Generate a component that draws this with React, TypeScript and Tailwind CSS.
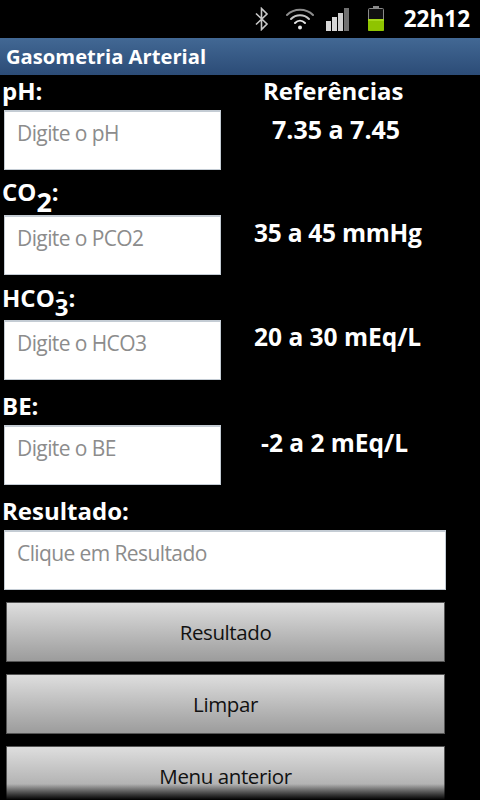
const font = { fontFamily: '"Open Sans", "Noto Sans", sans-serif' };

function BluetoothIcon() {
  return (
    <svg className="h-[24px] w-[14px]" viewBox="0 0 14 24" fill="none" stroke="#c8c8c8" strokeWidth="1.6">
      <path d="M1 6.5 L12 17 L6.5 22.5 V1.5 L12 7 L1 17.5" />
    </svg>
  );
}

function WifiIcon() {
  return (
    <svg className="ml-[17px] h-[24px] w-[28px]" viewBox="0 0 28 24" fill="none" strokeLinecap="round">
      <path d="M1 8 C8 1 20 1 27 8" stroke="#8c8c8c" strokeWidth="2" />
      <path d="M5 12 C10 7 18 7 23 12" stroke="#c4c4c4" strokeWidth="2" />
      <path d="M9 16 C12 13 16 13 19 16" stroke="#e4e4e4" strokeWidth="2" />
      <circle cx="14" cy="20.5" r="2" fill="#e8e8e8" />
    </svg>
  );
}

function SignalIcon() {
  return (
    <svg className="ml-[11px] h-[24px] w-[24px]" viewBox="0 0 24 24">
      <rect x="1" y="14" width="5" height="10" fill="#d8d8d8" />
      <rect x="7" y="10" width="5" height="14" fill="#d8d8d8" />
      <rect x="13" y="6" width="5" height="18" fill="#d0d0d0" />
      <rect x="19" y="1" width="5" height="23" fill="#707070" />
    </svg>
  );
}

function BatteryIcon() {
  return (
    <svg className="ml-[18px] h-[26px] w-[18px]" viewBox="0 0 18 26">
      <rect x="6" y="0" width="6" height="3" fill="#8a8a8a" />
      <rect x="1.5" y="2.5" width="15" height="22" rx="1" fill="#111" stroke="#8a8a8a" />
      <rect x="1" y="13" width="16" height="12" rx="1" fill="#8fc400" />
      <rect x="1" y="13" width="16" height="2" fill="#a6d81a" />
    </svg>
  );
}

function Label({ children, spacing }: { children: React.ReactNode; spacing: string }) {
  return <div className={`pl-[2px] text-[24px] font-bold leading-[30px] text-white ${spacing}`}>{children}</div>;
}

function Field({ placeholder, wide }: { placeholder: string; wide?: boolean }) {
  return (
    <textarea
      className={`ml-[4px] block h-[60px] resize-none overflow-hidden border border-[#c4ccd4] border-t-2 bg-white px-[12px] pt-[6px] text-[21px] leading-[30px] tracking-[-0.6px] outline-none placeholder:text-[#8c8c8c] ${wide ? "w-[442px]" : "w-[217px]"}`}
      style={font}
      placeholder={placeholder}
      readOnly
    />
  );
}

function Reference({ children, offset }: { children: string; offset: string }) {
  return <div className={`flex-1 text-[24.5px] font-bold leading-[30px] text-white ${offset}`}>{children}</div>;
}

function ActionButton({ children }: { children: string }) {
  return (
    <button
      type="button"
      className="ml-[6px] block h-[60px] w-[439px] shrink-0 border border-[#555] bg-gradient-to-b from-[#dedede] to-[#9c9c9c] text-center text-[20.5px] leading-[58px] tracking-[-0.4px] text-[#111]"
      style={font}
    >
      {children}
    </button>
  );
}

export default function App() {
  return (
    <div className="relative h-[800px] w-[480px] overflow-hidden bg-black" style={font}>
      <div className="flex h-[38px] items-center justify-end pr-[10px]">
        <BluetoothIcon />
        <WifiIcon />
        <SignalIcon />
        <BatteryIcon />
        <span className="ml-[19px] text-[22.5px] font-bold text-white">22h12</span>
      </div>

      <div className="flex h-[37px] items-center bg-gradient-to-b from-[#426894] to-[#2c4c77] pl-[6px] text-[20.2px] font-bold text-white">
        Gasometria Arterial
      </div>

      <div className="flex">
        <div className="w-[240px]">
          <Label spacing="h-[35px] pt-[1px]">pH:</Label>
          <Field placeholder="Digite o pH" />
        </div>
        <div className="flex-1">
          <div className="pt-[1px] pl-[23px] text-[24px] font-bold leading-[30px] text-white">Referências</div>
          <div className="pt-[8px] pl-[32px] text-[25px] font-bold leading-[30px] text-white">7.35 a 7.45</div>
        </div>
      </div>

      <div className="flex">
        <div className="w-[240px]">
          <Label spacing="h-[45px] pt-[7px]">
            CO<sub className="top-[11px] text-[27px]">2</sub>:
          </Label>
          <Field placeholder="Digite o PCO2" />
        </div>
        <Reference offset="pt-[48px] pl-[14px] tracking-[-0.25px]">35 a 45 mmHg</Reference>
      </div>

      <div className="flex">
        <div className="w-[240px]">
          <Label spacing="h-[45px] pt-[8px]">
            HCO
            <span className="relative">
              <sub className="top-[9px] text-[24px]">3</sub>
              <span className="absolute left-[3px] top-[0px] text-[20px] leading-none">-</span>
            </span>
            :
          </Label>
          <Field placeholder="Digite o HCO3" />
        </div>
        <Reference offset="pt-[47px] pl-[14px]">20 a 30 mEq/L</Reference>
      </div>

      <div className="flex">
        <div className="w-[240px]">
          <Label spacing="h-[45px] pt-[11px]">BE:</Label>
          <Field placeholder="Digite o BE" />
        </div>
        <Reference offset="pt-[48px] pl-[21px]">-2 a 2 mEq/L</Reference>
      </div>

      <Label spacing="h-[45px] pt-[11px]">Resultado:</Label>
      <Field placeholder="Clique em Resultado" wide />

      <div className="mt-[12px] flex flex-col gap-[12px]">
        <ActionButton>Resultado</ActionButton>
        <ActionButton>Limpar</ActionButton>
        <ActionButton>Menu anterior</ActionButton>
      </div>

      <div className="absolute inset-x-0 bottom-0 h-[16px] bg-gradient-to-b from-transparent to-black" />
    </div>
  );
}
